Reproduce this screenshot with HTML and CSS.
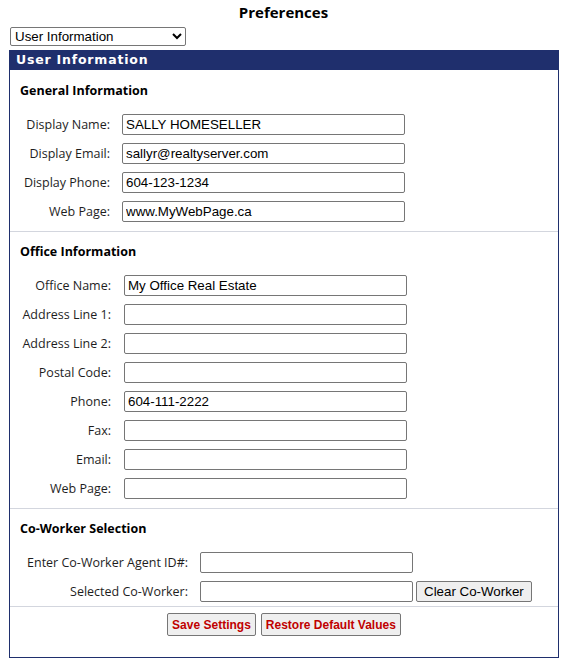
FILE: index.html
```html
<!DOCTYPE html>
<html>
<head>
<meta charset="utf-8">
<title>Preferences</title>
<link rel="stylesheet" href="styles.css">
</head>
<body>
<h1 class="page-title">Preferences</h1>
<div class="picker">
  <select class="section-select">
    <option>User Information</option>
    <option>Display Options</option>
  </select>
</div>
<div class="panel">
  <div class="panel-head">User Information</div>

  <div class="group group-general">
    <div class="group-title">General Information</div>
    <div class="row"><label>Display Name:</label><input type="text" value="SALLY HOMESELLER"></div>
    <div class="row"><label>Display Email:</label><input type="text" value="sallyr@realtyserver.com"></div>
    <div class="row"><label>Display Phone:</label><input type="text" value="604-123-1234"></div>
    <div class="row"><label>Web Page:</label><input type="text" value="www.MyWebPage.ca"></div>
  </div>

  <div class="group group-office">
    <div class="group-title">Office Information</div>
    <div class="row"><label>Office Name:</label><input type="text" value="My Office Real Estate"></div>
    <div class="row"><label>Address Line 1:</label><input type="text" value=""></div>
    <div class="row"><label>Address Line 2:</label><input type="text" value=""></div>
    <div class="row"><label>Postal Code:</label><input type="text" value=""></div>
    <div class="row"><label>Phone:</label><input type="text" value="604-111-2222"></div>
    <div class="row"><label>Fax:</label><input type="text" value=""></div>
    <div class="row"><label>Email:</label><input type="text" value=""></div>
    <div class="row"><label>Web Page:</label><input type="text" value=""></div>
  </div>

  <div class="group group-cowork">
    <div class="group-title">Co-Worker Selection</div>
    <div class="row"><label>Enter Co-Worker Agent ID#:</label><input type="text" value=""></div>
    <div class="row"><label>Selected Co-Worker:</label><input type="text" value=""><button class="btn-plain" type="button">Clear Co-Worker</button></div>
  </div>

  <div class="actions">
    <button class="btn-action" type="button">Save Settings</button>
    <button class="btn-action" type="button">Restore Default Values</button>
  </div>
</div>
</body>
</html>
```

FILE: styles.css
```css
body {
  margin: 0;
  font-family: "Open Sans", "Noto Sans", sans-serif;
  color: #1a1a1a;
  background: #fff;
}

.page-title {
  margin: 2px 0 0;
  font-size: 15px;
  line-height: 20px;
  font-weight: 700;
  text-align: center;
  color: #000;
}

.picker {
  padding: 5px 0 0 10px;
  height: 19px;
}

.section-select {
  display: block;
  width: 176px;
  height: 19px;
  margin: 0;
  padding: 0;
  font-family: "Liberation Sans", Arial, sans-serif;
  font-size: 13.33px;
  color: #000;
  border: 1px solid #767676;
  border-radius: 2px;
  background: #fff;
}

.panel {
  margin: 4px 0 0 9px;
  width: 548px;
  border: 1px solid #1f2f6d;
  border-top: 0;
  padding-bottom: 21px;
}

.panel-head {
  height: 20px;
  line-height: 20px;
  background: #1f2f6d;
  color: #fff;
  font-family: "DejaVu Sans", Verdana, sans-serif;
  font-weight: 700;
  font-size: 12.5px;
  padding-left: 6px;
  letter-spacing: 0.8px;
}

.group {
  padding: 11px 0 5px 10px;
  border-bottom: 1px solid #d3d6de;
}

.group-office,
.group-cowork {
  padding-top: 10px;
}

.group-cowork {
  padding-bottom: 0;
}

.group-title {
  font-size: 12.5px;
  font-weight: 700;
  line-height: 20px;
  color: #000;
  margin-bottom: 9px;
}

.row {
  display: flex;
  align-items: center;
  height: 29px;
}

.row label {
  flex: none;
  text-align: right;
  font-size: 12.5px;
  color: #1e1e1e;
}

.group-general .row label {
  width: 90px;
  margin-right: 12px;
}

.group-office .row label {
  width: 91px;
  margin-right: 13px;
}

.group-cowork .row label {
  width: 168px;
  margin-right: 12px;
}

.row input {
  box-sizing: border-box;
  width: 283px;
  height: 21px;
  margin: 0;
  padding: 0 3px;
  font-family: "Liberation Sans", Arial, sans-serif;
  font-size: 13.33px;
  color: #000;
  border: 1px solid #767676;
  border-radius: 2px;
  background: #fff;
}

.group-cowork .row input {
  width: 213px;
}

.btn-plain,
.btn-action {
  box-sizing: border-box;
  margin: 0;
  border: 1px solid #767676;
  border-radius: 2px;
  background: #efefef;
  font-family: "Liberation Sans", Arial, sans-serif;
}

.btn-plain {
  height: 21px;
  margin-left: 3px;
  padding: 0 7px;
  font-size: 13.33px;
  color: #000;
}

.actions {
  display: flex;
  justify-content: center;
  gap: 5px;
  padding-top: 6px;
}

.btn-action {
  height: 23px;
  padding: 0 4px;
  font-size: 12px;
  font-weight: 700;
  color: #c00000;
}
```
